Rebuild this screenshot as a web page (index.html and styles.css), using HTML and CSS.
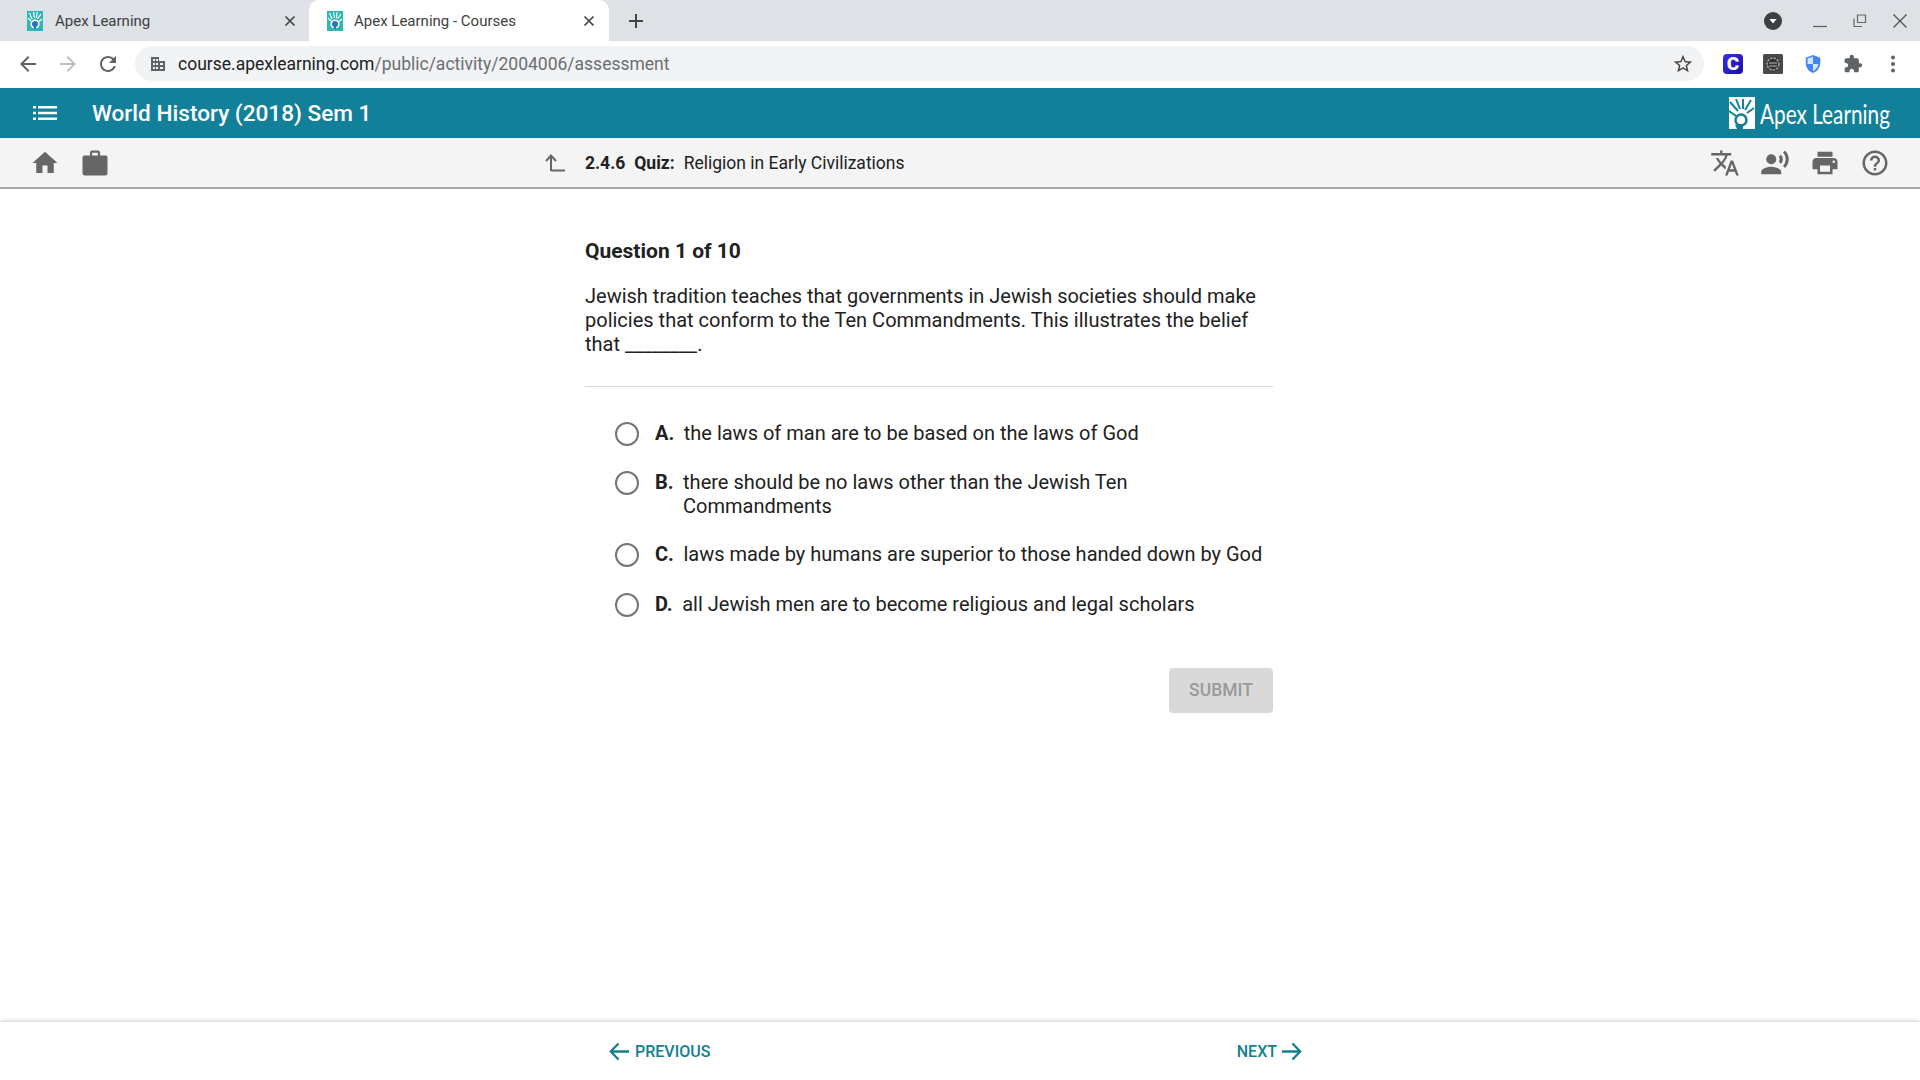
FILE: index.html
```html
<!doctype html>
<html>
<head>
<meta charset="UTF-8">
<title>Apex Learning - Courses</title>
<link rel="stylesheet" href="styles.css">
</head>
<body>
<div class="tabstrip">
  <div class="tab first">
    <svg class="favicon" viewBox="0 0 16 20"><rect width="16" height="20" fill="#2bb8b4"/><path d="M2.500 2l2.500 6M6.500 1l1 6M10 1l-.5 6M14 3l-3.500 5M1 7l3 3M15 8l-3 2.500" stroke="#fff" stroke-width="1.200"/><circle cx="8" cy="13" r="4.600" fill="#fff"/><circle cx="8" cy="13" r="3" fill="#2f6fc0"/><rect x="6.800" y="15" width="2.400" height="3" fill="#2f6fc0"/></svg>
    <span class="tab-title">Apex Learning</span>
    <svg class="tab-x" viewBox="0 0 12 12"><path d="M1.500 1.500l9 9M10.500 1.500l-9 9" stroke="#444" stroke-width="1.700"/></svg>
  </div>
  <div class="tab active">
    <svg class="favicon" viewBox="0 0 16 20"><rect width="16" height="20" fill="#2bb8b4"/><path d="M2.500 2l2.500 6M6.500 1l1 6M10 1l-.5 6M14 3l-3.500 5M1 7l3 3M15 8l-3 2.500" stroke="#fff" stroke-width="1.200"/><circle cx="8" cy="13" r="4.600" fill="#fff"/><circle cx="8" cy="13" r="3" fill="#2f6fc0"/><rect x="6.800" y="15" width="2.400" height="3" fill="#2f6fc0"/></svg>
    <span class="tab-title">Apex Learning - Courses</span>
    <svg class="tab-x" viewBox="0 0 12 12"><path d="M1.500 1.500l9 9M10.500 1.500l-9 9" stroke="#444" stroke-width="1.700"/></svg>
  </div>
  <svg class="newtab" viewBox="0 0 16 16"><path d="M8 1v14M1 8h14" stroke="#444" stroke-width="2"/></svg>
  <div class="winctl">
    <svg class="profile" viewBox="0 0 18 18"><circle cx="9" cy="9" r="9" fill="#3c4043"/><path d="M5.400 7h7.200L9 11.500z" fill="#fff"/></svg>
    <svg class="winbtn" viewBox="0 0 16 16"><path d="M1 13.500h14" stroke="#666" stroke-width="1.300"/></svg>
    <svg class="winbtn" viewBox="0 0 16 16"><path d="M5.500 2h8v7.500h-8zM2 5.500v8h8" fill="none" stroke="#666" stroke-width="1.200"/></svg>
    <svg class="winbtn" viewBox="0 0 16 16"><path d="M1.500 1.500l13 13M14.500 1.500l-13 13" stroke="#555" stroke-width="1.400"/></svg>
  </div>
</div>

<div class="toolbar">
  <svg class="nav-ic" viewBox="0 0 24 24"><path fill="#5f6368" d="M20 11H7.830l5.590-5.590L12 4l-8 8 8 8 1.410-1.410L7.830 13H20v-2z"/></svg>
  <svg class="nav-ic" viewBox="0 0 24 24"><path fill="#bdc1c6" d="M4 11h12.170l-5.590-5.590L12 4l8 8-8 8-1.410-1.410L16.170 13H4v-2z"/></svg>
  <svg class="nav-ic" viewBox="0 0 24 24"><path fill="#5f6368" d="M17.650 6.350C16.200 4.900 14.210 4 12 4c-4.420 0-7.990 3.580-7.990 8s3.570 8 7.990 8c3.730 0 6.840-2.550 7.730-6h-2.080c-.82 2.330-3.040 4-5.650 4-3.310 0-6-2.690-6-6s2.690-6 6-6c1.660 0 3.140.69 4.220 1.780L13 11h7V4l-2.350 2.350z"/></svg>
  <div class="omnibox">
    <svg class="site-ic" viewBox="0 0 16 16"><path fill="#5f6368" d="M1 1h8v4h6v10H1zm2 2v2h2V3zm3 0v2h2V3zM3 7v2h2V7zm3 0v2h2V7zm-3 4v2h2v-2zm3 0v2h2v-2zm4-4v2h3V7zm0 4v2h3v-2z"/></svg>
    <span class="url"><span class="url-host">course.apexlearning.com</span>/public/activity/2004006/assessment</span>
    <svg class="star" viewBox="0 0 24 24"><path fill="#444" d="M22 9.240l-7.190-.62L12 2 9.190 8.630 2 9.240l5.460 4.730L5.820 21 12 17.270 18.180 21l-1.630-7.030L22 9.240zM12 15.400l-3.760 2.270 1-4.280-3.320-2.880 4.380-.38L12 6.100l1.710 4.040 4.380.38-3.320 2.880 1 4.280L12 15.400z"/></svg>
  </div>
  <div class="ext-row">
    <div class="ext ext-c">C</div>
    <svg class="ext" viewBox="0 0 20 20"><rect width="20" height="20" rx="1.500" fill="#4a4a4a"/><circle cx="10" cy="10" r="7.500" fill="#333"/><circle cx="10" cy="10" r="6" fill="none" stroke="#aaa" stroke-width="1.500" stroke-dasharray="2.500 1"/><path d="M6 9h8M6 12h8" stroke="#bbb"/></svg>
    <svg class="ext" viewBox="0 0 20 22"><path fill="#4285f4" d="M10 1l8 3v6c0 5-3.400 9.500-8 11-4.600-1.500-8-6-8-11V4z"/><path fill="#d6e4fc" d="M10 3v8H4V5zM10 11h6c-.5 3.500-3 6.500-6 8z"/></svg>
    <svg class="ext" viewBox="0 0 24 24"><path fill="#5f6368" d="M20.500 11H19V7c0-1.100-.9-2-2-2h-4V3.500C13 2.120 11.880 1 10.500 1S8 2.120 8 3.500V5H4c-1.100 0-1.990.9-1.990 2v3.800H3.500c1.490 0 2.700 1.210 2.700 2.700s-1.210 2.700-2.700 2.700H2V20c0 1.100.9 2 2 2h3.800v-1.500c0-1.490 1.210-2.700 2.700-2.700 1.490 0 2.700 1.210 2.700 2.700V22H17c1.100 0 2-.9 2-2v-4h1.500c1.380 0 2.500-1.120 2.500-2.500S21.880 11 20.500 11z"/></svg>
    <svg class="ext" viewBox="0 0 20 20"><circle cx="10" cy="3.500" r="2" fill="#5f6368"/><circle cx="10" cy="10" r="2" fill="#5f6368"/><circle cx="10" cy="16.500" r="2" fill="#5f6368"/></svg>
  </div>
</div>

<header class="course-bar">
  <svg class="menu-ic" viewBox="0 0 24 14"><path fill="#fff" d="M0 0h3v2.400H0zM5 0h19v2.400H5zM0 5.800h3v2.400H0zM5 5.800h19v2.400H5zM0 11.600h3V14H0zM5 11.600h19V14H5z"/></svg>
  <h1 class="course-title">World History (2018) Sem 1</h1>
  <div class="logo">
    <svg class="logo-mark" viewBox="0 0 26 32"><rect width="26" height="32" fill="#fff"/><path d="M1 5l8 9M7 2l4 10M14 2v10M22 3l-6 10M25 11l-7 5M0 14l7 5" stroke="#13809a" stroke-width="2"/><circle cx="12" cy="23" r="5.500" fill="none" stroke="#13809a" stroke-width="2.500"/><path d="M6 28l2 4h6v-5z" fill="#13809a"/></svg>
    <span class="logo-text">Apex Learning</span>
  </div>
</header>

<div class="activity-bar">
  <svg class="bar-ic home" viewBox="0 0 24 24"><path d="M10 20v-6h4v6h5v-8h3L12 3 2 12h3v8z"/></svg>
  <svg class="bar-ic" viewBox="0 0 24 24"><path d="M9.500 2h5A1.500 1.500 0 0 1 16 3.500V6h4.500A1.500 1.500 0 0 1 22 7.500V20a2 2 0 0 1-2 2H4a2 2 0 0 1-2-2V7.500A1.500 1.500 0 0 1 3.500 6H8V3.500A1.500 1.500 0 0 1 9.500 2zm.2 1.700V6h4.600V3.700z"/></svg>
  <svg class="up-ic" viewBox="0 0 20 20"><path d="M6 18V3M1 8l5-5.500L11 8M6 17.500h14" fill="none" stroke="#666" stroke-width="2"/></svg>
  <div class="crumb"><b>2.4.6</b><b>Quiz:</b><span>Religion in Early Civilizations</span></div>
  <div class="bar-tools">
    <svg class="bar-ic" viewBox="0 0 24 24"><path d="M12.870 15.070l-2.540-2.510.03-.03c1.740-1.940 2.980-4.170 3.710-6.530H17V4h-7V2H8v2H1v1.990h11.170C11.500 7.920 10.440 9.750 9 11.350 8.070 10.320 7.300 9.190 6.690 8h-2c.73 1.630 1.730 3.170 2.980 4.560l-5.090 5.020L4 19l5-5 3.110 3.110.76-2.040zM18.500 10h-2L12 22h2l1.120-3h4.750L21 22h2l-4.500-12zm-2.620 7l1.620-4.330L19.120 17h-3.240z"/></svg>
    <svg class="bar-ic" viewBox="0 0 24 24"><circle cx="9" cy="9" r="4"/><path d="M9 15c-2.670 0-8 1.340-8 4v2h16v-2c0-2.660-5.330-4-8-4zm7.760-9.640l-1.680 1.690c.84 1.180.84 2.710 0 3.890l1.680 1.690c2.020-2.020 2.020-5.070 0-7.270zM20.070 2l-1.630 1.630c2.770 3.020 2.770 7.560 0 10.740L20.070 16c3.900-3.890 3.910-9.950 0-14z"/></svg>
    <svg class="bar-ic" viewBox="0 0 24 24"><path d="M19 8H5c-1.660 0-3 1.340-3 3v6h4v4h12v-4h4v-6c0-1.660-1.340-3-3-3zm-3 11H8v-5h8v5zm3-7c-.55 0-1-.45-1-1s.45-1 1-1 1 .45 1 1-.45 1-1 1zm-1-9H6v4h12V3z"/></svg>
    <svg class="bar-ic" viewBox="0 0 24 24"><path d="M11 18h2v-2h-2v2zm1-16C6.480 2 2 6.480 2 12s4.480 10 10 10 10-4.480 10-10S17.520 2 12 2zm0 18c-4.410 0-8-3.590-8-8s3.590-8 8-8 8 3.590 8 8-3.590 8-8 8zm0-14c-2.210 0-4 1.790-4 4h2c0-1.100.9-2 2-2s2 .9 2 2c0 2-3 1.750-3 5h2c0-2.250 3-2.500 3-5 0-2.210-1.790-4-4-4z"/></svg>
  </div>
</div>

<main class="quiz">
  <h2 class="q-count">Question 1 of 10</h2>
  <p class="q-text">Jewish tradition teaches that governments in Jewish societies should make policies that conform to the Ten Commandments. This illustrates the belief that ________.</p>
  <hr class="q-rule">
  <div class="choices">
    <div class="choice"><span class="radio"></span><b class="letter">A.</b><span>the laws of man are to be based on the laws of God</span></div>
    <div class="choice"><span class="radio"></span><b class="letter">B.</b><span>there should be no laws other than the Jewish Ten Commandments</span></div>
    <div class="choice"><span class="radio"></span><b class="letter">C.</b><span>laws made by humans are superior to those handed down by God</span></div>
    <div class="choice"><span class="radio"></span><b class="letter">D.</b><span>all Jewish men are to become religious and legal scholars</span></div>
  </div>
  <div class="submit-row"><div class="submit">SUBMIT</div></div>
</main>

<footer class="pager">
  <div class="pager-link prev"><svg class="pager-ic" viewBox="0 0 22 20"><path d="M21 10H2M10 1.500L1.800 10l8.200 8.500" fill="none" stroke="#13808c" stroke-width="2.400"/></svg>PREVIOUS</div>
  <div class="pager-link">NEXT<svg class="pager-ic" viewBox="0 0 22 20"><path d="M1 10h19M12 1.500l8.200 8.500-8.200 8.500" fill="none" stroke="#13808c" stroke-width="2.400"/></svg></div>
</footer>
</body>
</html>
```

FILE: styles.css
```css
html, body {
	margin: 0;
	padding: 0;
}
body {
	width: 1920px;
	height: 1080px;
	overflow: hidden;
	display: flex;
	flex-direction: column;
	font-family: Roboto, "Liberation Sans", sans-serif;
	color: #212121;
	background-color: #fff;
}

/* browser chrome */
.tabstrip {
	height: 41px;
	display: flex;
	align-items: center;
	padding-left: 9px;
	background-color: #dee1e6;
}
.tab {
	width: 300px;
	height: 41px;
	box-sizing: border-box;
	display: flex;
	align-items: center;
	padding: 0 14px 0 18px;
	font-size: 15px;
	color: #3c4043;
}
.tab.first {
	padding-right: 13px;
}
.tab.first .favicon {
	margin-right: 12px;
}
.tab.active {
	background-color: #fff;
	border-radius: 10px 10px 0 0;
}
.favicon {
	width: 16px;
	height: 20px;
	margin-right: 11px;
}
.tab-title {
	flex: 1;
}
.tab-x {
	width: 12px;
	height: 12px;
}
.newtab {
	width: 16px;
	height: 16px;
	margin-left: 19px;
}
.winctl {
	margin-left: auto;
	display: flex;
	align-items: center;
	padding-right: 12px;
}
.profile {
	width: 18px;
	height: 18px;
	margin-right: 6px;
}
.winbtn {
	width: 16px;
	height: 16px;
	margin-left: 24px;
}
.toolbar {
	height: 47px;
	display: flex;
	align-items: center;
	padding: 0 0 2px 16px;
	background-color: #fff;
	box-sizing: border-box;
}
.nav-ic {
	width: 24px;
	height: 24px;
	margin-right: 16px;
}
.omnibox {
	width: 1569px;
	height: 35px;
	margin-left: -1px;
	box-sizing: border-box;
	display: flex;
	align-items: center;
	padding: 0 10px 0 15px;
	border-radius: 18px;
	background-color: #f1f3f4;
}
.site-ic {
	width: 16px;
	height: 16px;
	margin-right: 12px;
}
.url {
	flex: 1;
	font-size: 17.500px;
	color: #6b6e72;
}
.url-host {
	color: #202124;
}
.star {
	width: 22px;
	height: 22px;
}
.ext-row {
	display: flex;
	align-items: center;
	gap: 20px;
	margin-left: 19px;
}
.ext {
	width: 20px;
	height: 20px;
}
.ext-c {
	display: flex;
	align-items: center;
	justify-content: center;
	border-radius: 4px;
	background: linear-gradient(135deg, #3a30e0, #1a0fa8);
	color: #fff;
	font-size: 19px;
	font-weight: 900;
}

/* course header */
.course-bar {
	height: 50px;
	display: flex;
	align-items: center;
	padding: 0 30px 0 33px;
	background-color: #13809a;
	color: #fff;
}
.menu-ic {
	width: 24px;
	height: 14px;
}
.course-title {
	margin: 0 0 0 35px;
	font-size: 22.600px;
	font-weight: 500;
}
.logo {
	margin-left: auto;
	display: flex;
	align-items: center;
}
.logo-mark {
	width: 26px;
	height: 32px;
}
.logo-text {
	width: 130px;
	margin-left: 5px;
	font-family: Lato, sans-serif;
	font-size: 27px;
	white-space: nowrap;
	transform: scaleX(.77);
	transform-origin: left center;
}

.activity-bar {
	height: 51px;
	box-sizing: border-box;
	display: flex;
	align-items: center;
	padding: 0 30px 0 30px;
	background-color: #f4f4f4;
	border-bottom: 2px solid #a6a6a6;
}
.bar-ic {
	width: 30px;
	height: 30px;
	margin-right: 20px;
	fill: #666;
}
.bar-tools {
	margin-left: auto;
	display: flex;
}
.bar-tools .bar-ic:last-child {
	margin-right: 0;
}
.up-ic {
	width: 20px;
	height: 20px;
	margin-left: 415px;
}
.crumb {
	display: flex;
	gap: 9px;
	margin-left: 20px;
	font-size: 17.500px;
}
.crumb b {
	font-weight: 700;
}

/* question */
.quiz {
	flex: 1;
	width: 688px;
	margin-left: 585px;
	padding-top: 49px;
}
.q-count {
	margin: 0 0 20px;
	font-size: 21px;
	line-height: 26px;
	font-weight: 700;
}
.q-text {
	margin: 0;
	font-size: 20px;
	line-height: 24px;
}
.q-rule {
	margin: 30px 0 34px;
	border: 0;
	border-top: 1px solid #d9d9d9;
}
.choices {
	display: flex;
	flex-direction: column;
	gap: 24px;
	padding-left: 30px;
}
.choice {
	display: flex;
	font-size: 20px;
	line-height: 24px;
}
.choice:last-child {
	margin-top: 1px;
}
.radio {
	flex: none;
	width: 24px;
	height: 24px;
	box-sizing: border-box;
	margin: 1px 16px 0 0;
	border: 2px solid #757575;
	border-radius: 50%;
	background-color: #fff;
}
.letter {
	margin-right: 9.500px;
}
.submit-row {
	display: flex;
	justify-content: flex-end;
	margin-top: 51px;
}
.submit {
	width: 104px;
	height: 45px;
	box-sizing: border-box;
	padding-bottom: 2px;
	display: flex;
	align-items: center;
	justify-content: center;
	border-radius: 4px;
	background-color: #d9d9d9;
	color: #9a9a9a;
	font-size: 17.500px;
	font-weight: 500;
}

/* bottom nav */
.pager {
	height: 58px;
	display: flex;
	align-items: center;
	justify-content: space-between;
	padding: 0 618px 0 609px;
	background-color: #fff;
	box-shadow: 0 -1px 4px rgba(0, 0, 0, .2);
}
.pager-link {
	display: flex;
	align-items: center;
	gap: 4px;
	color: #13808c;
	font-size: 16px;
	font-weight: 500;
}
.pager-link.prev {
	gap: 5px;
}
.pager-ic {
	width: 21px;
	height: 19px;
}
```
